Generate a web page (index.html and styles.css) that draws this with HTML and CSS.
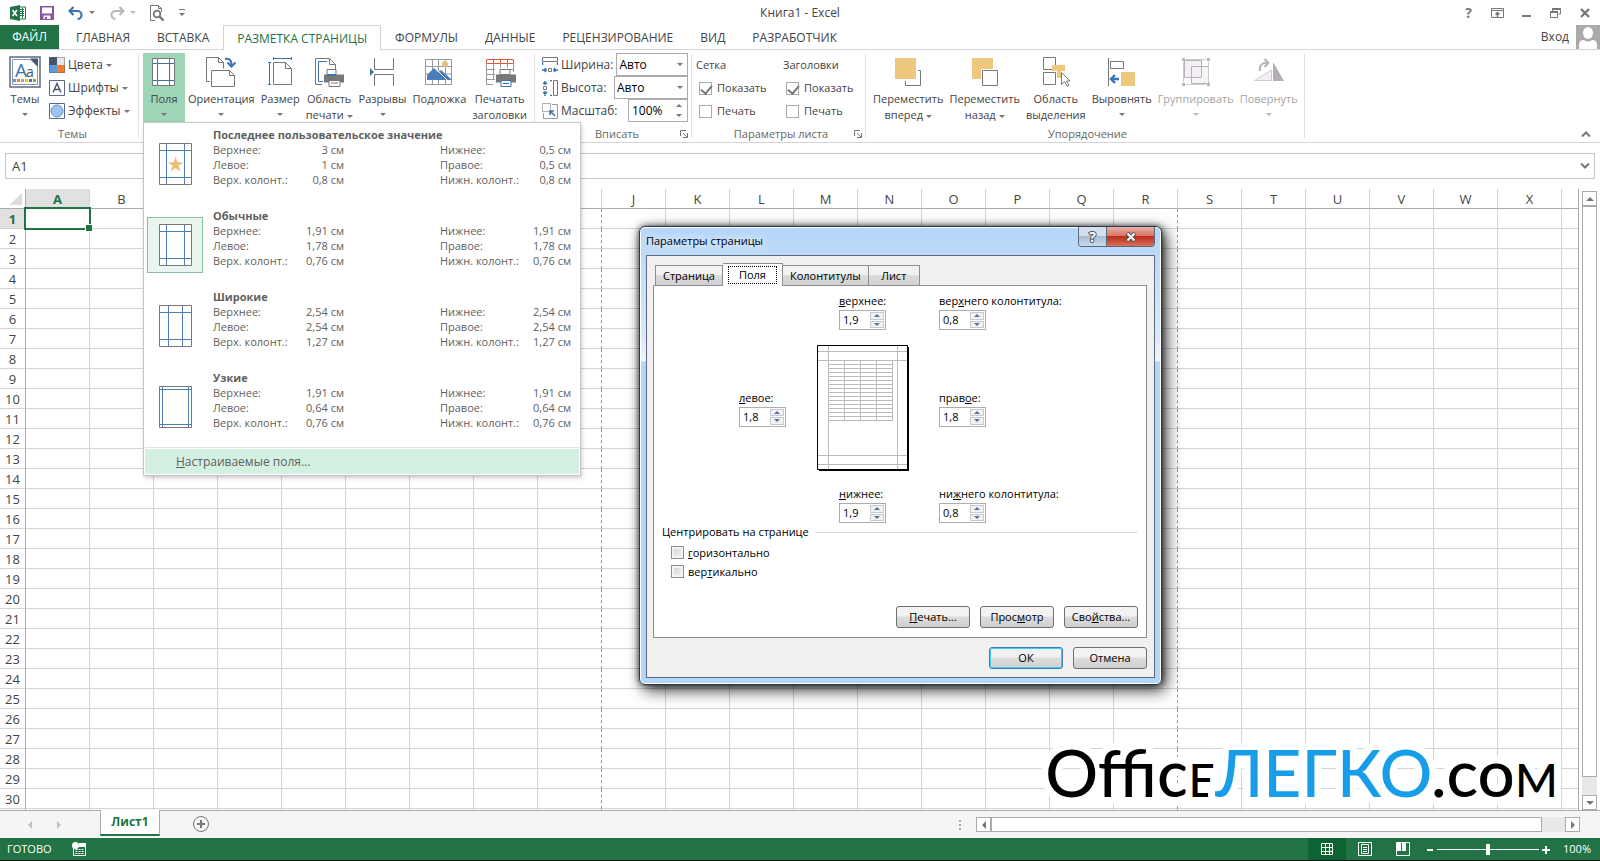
FILE: index.html
```html
<!DOCTYPE html>
<html lang="ru">
  <head>
    <meta charset="UTF-8" />
    <meta name="viewport" content="width=device-width, initial-scale=1.0" />
    <title>Книга1 - Excel</title>
    <link rel="stylesheet" href="styles.css">
  </head>
  <body>
    <header class="titlebar">
      <div class="quick-access">
        <svg width="16" height="16" viewBox="0 0 16 16">
          <path d="M9 2h6.500v12H9z" fill="#fff" stroke="#217346" />
          <path d="M10 4.500h4M10 6.500h4M10 8.500h4M10 10.500h4M12.500 3v10" stroke="#217346" />
          <path d="M0 2l10-2v16L0 14z" fill="#217346" />
          <path d="M2.500 5l4.500 6M7 5l-4.500 6" stroke="#fff" stroke-width="1.600" />
        </svg>
        <button class="quick" aria-label="Сохранить">
          <svg width="14" height="14" viewBox="0 0 14 14">
            <path d="M0 0h14v14H0z" fill="#8754a1" />
            <path d="M2 1.500h10v6H2zM3.500 9.500h7V13h-7z" fill="#fff" />
            <path d="M5 11h2v2H5z" fill="#8754a1" />
          </svg>
        </button>
        <button class="quick" aria-label="Отменить">
          <svg width="16" height="14" viewBox="0 0 16 14">
            <path d="M1.500 5h8a4 4 0 0 1 0 8" fill="none" stroke="#3b74ae" stroke-width="2.200" />
            <path d="M5.500 1l-4 4 4 4" fill="none" stroke="#3b74ae" stroke-width="2.200" />
          </svg>
          <i class="arrow"></i>
        </button>
        <button class="quick" aria-label="Вернуть" disabled>
          <svg width="16" height="14" viewBox="0 0 16 14">
            <path d="M14.500 5h-8a4 4 0 0 0 0 8M10.500 1l4 4-4 4" fill="none" stroke="#b5b5b5" stroke-width="2" />
          </svg>
          <i class="arrow"></i>
        </button>
        <button class="quick" aria-label="Просмотр">
          <svg width="15" height="16" viewBox="0 0 15 16">
            <path d="M5 15.500H.5V.5h8l3 3V7M8.500.5v3h3" fill="none" stroke="#777" />
            <circle cx="7" cy="9" r="3.300" fill="#fff" stroke="#777" stroke-width="1.800" />
            <path d="M9.500 11.500l4 4" stroke="#777" stroke-width="2.400" />
          </svg>
        </button>
        <button class="quick customize" aria-label="Настройка панели"><i class="arrow"></i></button>
      </div>
      <div class="title">Книга1 - Excel</div>
      <div class="window-controls">
        <button aria-label="Справка"><b>?</b></button>
        <button aria-label="Параметры отображения ленты">
          <svg width="13" height="10" viewBox="0 0 13 10">
            <path d="M.5.500h12v9H.5zM.5 2.500h12" fill="none" stroke="#777" />
            <path d="M6.500 9V5M4.500 6.500l2-2 2 2" fill="none" stroke="#777" stroke-width="1.400" />
          </svg>
        </button>
        <button aria-label="Свернуть">
          <svg width="10" height="10" viewBox="0 0 10 10"><path d="M0 7h9v2H0z" fill="#777" /></svg>
        </button>
        <button aria-label="Восстановить">
          <svg width="11" height="10" viewBox="0 0 11 10">
            <path d="M2.500 3V1h8v5h-2M.5 4h7v5.500h-7z" fill="none" stroke="#777" />
            <path d="M2 1h9M0 4h8" stroke="#777" stroke-width="2" />
          </svg>
        </button>
        <button aria-label="Закрыть">
          <svg width="10" height="10" viewBox="0 0 10 10"><path d="M1 1l8 8M9 1L1 9" stroke="#777" stroke-width="2.400" /></svg>
        </button>
      </div>
    </header>

    <nav class="tabs">
      <button class="file-tab">ФАЙЛ</button>
      <div class="tab-list">
        <button class="tab">ГЛАВНАЯ</button>
        <button class="tab">ВСТАВКА</button>
        <button class="tab active">РАЗМЕТКА СТРАНИЦЫ</button>
        <button class="tab">ФОРМУЛЫ</button>
        <button class="tab">ДАННЫЕ</button>
        <button class="tab">РЕЦЕНЗИРОВАНИЕ</button>
        <button class="tab">ВИД</button>
        <button class="tab">РАЗРАБОТЧИК</button>
      </div>
      <button class="sign-in">
        Вход
        <svg width="24" height="24" viewBox="0 0 24 24">
          <path d="M0 0h24v24H0z" fill="#aaa" />
          <ellipse cx="12" cy="8" rx="5" ry="6" fill="#fff" />
          <path d="M3 24v-4q0-5 5-5 4 3 8 0 5 0 5 5v4z" fill="#fff" />
        </svg>
      </button>
    </nav>

    <section class="ribbon">
      <div class="group themes">
        <div class="group-body">
          <button class="big">
            <svg width="32" height="32" viewBox="0 0 32 32">
              <path d="M1 1h30v30H1z" fill="#fff" stroke="#5a6785" stroke-width="1.500" />
              <path d="M3.500 3.500h18l7 7v18h-25z" fill="#fff" stroke="#8a93a8" />
              <path d="M21 2.500h8v8z" fill="#44546a" />
              <text x="6" y="21" class="icon-text" font-size="19" fill="#3b74ae">A</text>
              <text x="17" y="21" class="icon-text" font-size="14" fill="#44546a">a</text>
              <path d="M4 23h3v3H4z" fill="#5b9bd5" /><path d="M8 23h3v3H8z" fill="#ed7d31" />
              <path d="M12 23h3v3h-3z" fill="#a5a5a5" /><path d="M16 23h3v3h-3z" fill="#ffc000" />
              <path d="M20 23h3v3h-3z" fill="#4472c4" /><path d="M24 23h3v3h-3z" fill="#70ad47" />
            </svg>
            <span>Темы</span><i class="arrow"></i>
          </button>
          <div class="small-list">
            <button class="small">
              <svg width="16" height="16" viewBox="0 0 16 16">
                <path d="M0 0h8v8H0z" fill="#44546a" /><path d="M8 0h8v8H8z" fill="#e7e6e6" />
                <path d="M0 8h8v8H0z" fill="#5b9bd5" /><path d="M8 8h8v8H8z" fill="#ed7d31" />
                <path d="M.5.500h15v15H.5z" fill="none" stroke="#666" stroke-opacity=".5" />
              </svg>
              Цвета <i class="arrow"></i>
            </button>
            <button class="small">
              <svg width="16" height="16" viewBox="0 0 16 16">
                <path d="M.5.500h15v15H.5z" fill="#fff" stroke="#5a6785" />
                <path d="M4 12.500l4-9 4 9M5.500 9.500h5" fill="none" stroke="#44546a" stroke-width="1.400" />
              </svg>
              Шрифты <i class="arrow"></i>
            </button>
            <button class="small">
              <svg width="16" height="16" viewBox="0 0 16 16">
                <path d="M.5.500h15v15H.5z" fill="#fff" stroke="#5a6785" />
                <circle cx="8" cy="8" r="6" fill="#9dc3ee" stroke="#5b8fd0" />
              </svg>
              Эффекты <i class="arrow"></i>
            </button>
          </div>
        </div>
        <div class="group-name">Темы</div>
      </div>

      <div class="group page-setup">
        <div class="group-body">
          <div class="dropdown">
            <button class="big open">
              <svg width="32" height="32" viewBox="0 0 32 32">
                <path d="M4.500 2.500h22v27h-22z" fill="#fff" stroke="#777" />
                <path d="M9.500 3v26M21.500 3v26M5 7.500h21M5 24.500h21" stroke="#3b74ae" />
              </svg>
              <span>Поля</span><i class="arrow"></i>
            </button>
            <div class="menu">
              <button class="preset">
                <span class="preset-icon">
                  <svg width="33" height="42" viewBox="0 0 33 42">
                    <path d="M.5.500h32v41H.5z" fill="#fff" stroke="#777" />
                    <path d="M7.500 1v40M25.500 1v40M1 7.500h31M1 34.500h31" stroke="#4a7ebb" />
                    <path d="M16.500 13.500l1.900 5.700h6l-4.900 3.500 1.900 5.800-4.900-3.600-4.900 3.600 1.900-5.800-4.900-3.500h6z" fill="#e8bf7a" />
                  </svg>
                </span>
                <span class="preset-text">
                  <b>Последнее пользовательское значение</b>
                  <span>Верхнее:</span><span>3 см</span><span>Нижнее:</span><span>0,5 см</span>
                  <span>Левое:</span><span>1 см</span><span>Правое:</span><span>0,5 см</span>
                  <span>Верх. колонт.:</span><span>0,8 см</span><span>Нижн. колонт.:</span><span>0,8 см</span>
                </span>
              </button>
              <button class="preset selected">
                <span class="preset-icon">
                  <svg width="33" height="42" viewBox="0 0 33 42">
                    <path d="M.5.500h32v41H.5z" fill="#fff" stroke="#777" />
                    <path d="M7.500 1v40M25.500 1v40M1 7.500h31M1 34.500h31" stroke="#4a7ebb" />
                  </svg>
                </span>
                <span class="preset-text">
                  <b>Обычные</b>
                  <span>Верхнее:</span><span>1,91 см</span><span>Нижнее:</span><span>1,91 см</span>
                  <span>Левое:</span><span>1,78 см</span><span>Правое:</span><span>1,78 см</span>
                  <span>Верх. колонт.:</span><span>0,76 см</span><span>Нижн. колонт.:</span><span>0,76 см</span>
                </span>
              </button>
              <button class="preset">
                <span class="preset-icon">
                  <svg width="33" height="42" viewBox="0 0 33 42">
                    <path d="M.5.500h32v41H.5z" fill="#fff" stroke="#777" />
                    <path d="M9.500 1v40M23.500 1v40M1 7.500h31M1 34.500h31" stroke="#4a7ebb" />
                  </svg>
                </span>
                <span class="preset-text">
                  <b>Широкие</b>
                  <span>Верхнее:</span><span>2,54 см</span><span>Нижнее:</span><span>2,54 см</span>
                  <span>Левое:</span><span>2,54 см</span><span>Правое:</span><span>2,54 см</span>
                  <span>Верх. колонт.:</span><span>1,27 см</span><span>Нижн. колонт.:</span><span>1,27 см</span>
                </span>
              </button>
              <button class="preset">
                <span class="preset-icon">
                  <svg width="33" height="42" viewBox="0 0 33 42">
                    <path d="M.5.500h32v41H.5z" fill="#fff" stroke="#777" />
                    <path d="M3.500 1v40M29.500 1v40M1 3.500h31M1 38.500h31" stroke="#4a7ebb" />
                  </svg>
                </span>
                <span class="preset-text">
                  <b>Узкие</b>
                  <span>Верхнее:</span><span>1,91 см</span><span>Нижнее:</span><span>1,91 см</span>
                  <span>Левое:</span><span>0,64 см</span><span>Правое:</span><span>0,64 см</span>
                  <span>Верх. колонт.:</span><span>0,76 см</span><span>Нижн. колонт.:</span><span>0,76 см</span>
                </span>
              </button>
              <button class="custom"><u>Н</u>астраиваемые поля...</button>
            </div>
          </div>
          <button class="big">
            <svg width="32" height="32" viewBox="0 0 32 32">
              <path d="M5 25.500H1.500v-24h12l5 5v6M13.500 1.500v5h5" fill="none" stroke="#777" />
              <path d="M6.500 14.500h18l5 5v11h-23zM24.500 14.500v5h5" fill="#fff" stroke="#777" />
              <path d="M20 3c5-1 7 2 6.500 8" fill="none" stroke="#3b74ae" stroke-width="2" />
              <path d="M22.500 6.500l4 4 4-4" fill="none" stroke="#3b74ae" stroke-width="2" />
            </svg>
            <span>Ориентация</span><i class="arrow"></i>
          </button>
          <button class="big">
            <svg width="32" height="32" viewBox="0 0 32 32">
              <path d="M9.500 6.500h12l6 6v16h-18zM21.500 6.500v6h6" fill="#fff" stroke="#777" />
              <path d="M9 2.500h19M9.500 1v3M27.500 1v3M5.500 6v23M4 6.500h3M4 28.500h3" stroke="#3b74ae" />
            </svg>
            <span>Размер</span><i class="arrow"></i>
          </button>
          <button class="big">
            <svg width="32" height="32" viewBox="0 0 32 32">
              <path d="M9 28.500H2.500v-26h14l6 6v5M16.500 2.500v6h6" fill="none" stroke="#777" />
              <path d="M10 25.500H5.500v-20H14" fill="none" stroke="#3b74ae" />
              <path d="M14 13.500h9v5h-9z" fill="#fff" stroke="#777" />
              <path d="M11 18.500h20v8H11z" fill="#777" />
              <path d="M16 24.500h11v6H16zM18 27h7" fill="#fff" stroke="#777" />
              <path d="M14 19h9" stroke="#3b74ae" stroke-width="2" />
            </svg>
            <span>Область<br />печати <i class="arrow"></i></span>
          </button>
          <button class="big">
            <svg width="32" height="32" viewBox="0 0 32 32">
              <path d="M7.500 2v11.500h19V2M7.500 30V18.500h19V30" fill="none" stroke="#777" />
              <path d="M3 12l4 4-4 4z" fill="#3b74ae" />
            </svg>
            <span>Разрывы</span><i class="arrow"></i>
          </button>
          <button class="big">
            <svg width="32" height="32" viewBox="0 0 32 32">
              <path d="M2.500 3.500h26v25h-26zM9.500 3v25M15.500 3v25M22.500 3v25M3 10.500h25M3 18h25" fill="none" stroke="#999" />
              <circle cx="22" cy="8" r="3" fill="#e8bf7a" />
              <path d="M4 24v-5l7-7 4 4 3-2 10 9v1z" fill="#4a7ebb" />
              <path d="M15 15l9 9" stroke="#fff" />
            </svg>
            <span>Подложка</span>
          </button>
          <button class="big">
            <svg width="32" height="32" viewBox="0 0 32 32">
              <path d="M2.500 8v20.500H9M9.500 8v16M3 13.500h8M3 18.500h8M3 23.500h8M16.500 8v4M23.500 8v4M29.500 8v8M17 13.500h12" fill="none" stroke="#999" />
              <path d="M2.500 3.500h27v4h-27zM9.500 3v5M16.500 3v5M23.500 3v5" fill="#fff" stroke="#dd5b40" />
              <path d="M16 13.500h10v5H16z" fill="#fff" stroke="#777" />
              <path d="M12 18.500h20v8H12z" fill="#777" />
              <path d="M17 24.500h10v6H17zM19 27.500h6" fill="#fff" stroke="#3b74ae" />
            </svg>
            <span>Печатать<br />заголовки</span>
          </button>
        </div>
      </div>

      <div class="group fit">
        <div class="group-body fit-rows">
          <div class="fit-row">
            <svg width="16" height="16" viewBox="0 0 16 16">
              <path d="M.5.500h15v4H.5zM6.500 11.500h3v3h-3z" fill="#fff" stroke="#777" />
              <path d="M4 11l-2 2 2 2M0 13h5M12 11l2 2-2 2M11 13h5M.5 5v3M15.500 5v3" fill="none" stroke="#3b74ae" stroke-width="1.400" />
            </svg>
            <label for="fit-width">Ширина:</label>
            <div class="select"><select id="fit-width"><option>Авто</option></select></div>
          </div>
          <div class="fit-row">
            <svg width="16" height="16" viewBox="0 0 16 16">
              <path d="M11.500.500h4v15h-4zM1.500 6.500h3v3h-3z" fill="#fff" stroke="#777" />
              <path d="M1 4l2-2 2 2M3 1v4M1 12l2 2 2-2M3 11v5M8 .5h2M8 15.500h2" fill="none" stroke="#3b74ae" stroke-width="1.400" />
            </svg>
            <label for="fit-height">Высота:</label>
            <div class="select"><select id="fit-height"><option>Авто</option></select></div>
          </div>
          <div class="fit-row">
            <svg width="16" height="16" viewBox="0 0 16 16">
              <path d="M10 1.500h5.500v14h-14V10" fill="none" stroke="#999" />
              <path d="M.5.500h8v8h-8z" fill="#fff" stroke="#666" stroke-dasharray="1 1" />
              <path d="M13 13l-4-4M8 12V8h4" fill="none" stroke="#3b74ae" stroke-width="1.600" />
            </svg>
            <label for="scale">Масштаб:</label>
            <div class="spin scale">
              <input id="scale" type="text" value="100%" />
              <span><button aria-label="Больше"></button><button aria-label="Меньше"></button></span>
            </div>
          </div>
        </div>
        <div class="group-name">Вписать
          <button class="launcher" aria-label="Параметры"><svg width="8" height="8" viewBox="0 0 8 8"><path d="M.5 6V.500H6M3 3l4 4M7.500 3v4.500H3" fill="none" stroke="#777" /></svg></button>
        </div>
      </div>

      <div class="group sheet-options">
        <div class="group-body">
          <div class="options">
            <span>Сетка</span>
            <label><input type="checkbox" checked /> Показать</label>
            <label><input type="checkbox" /> Печать</label>
          </div>
          <div class="options">
            <span>Заголовки</span>
            <label><input type="checkbox" checked /> Показать</label>
            <label><input type="checkbox" /> Печать</label>
          </div>
        </div>
        <div class="group-name">Параметры листа
          <button class="launcher" aria-label="Параметры"><svg width="8" height="8" viewBox="0 0 8 8"><path d="M.5 6V.500H6M3 3l4 4M7.500 3v4.500H3" fill="none" stroke="#777" /></svg></button>
        </div>
      </div>

      <div class="group arrange">
        <div class="group-body">
          <button class="big">
            <svg width="32" height="32" viewBox="0 0 32 32">
              <path d="M13.500 14.500h15v15h-15z" fill="#fff" stroke="#777" />
              <path d="M2 1h24v24H2z" fill="#fff" />
              <path d="M3 2h21v21H3z" fill="#edc87e" />
            </svg>
            <span>Переместить<br />вперед <i class="arrow"></i></span>
          </button>
          <button class="big">
            <svg width="32" height="32" viewBox="0 0 32 32">
              <path d="M3 2h21v21H3z" fill="#edc87e" />
              <path d="M12 13h18v18H12z" fill="#fff" />
              <path d="M13.500 14.500h15v15h-15z" fill="#fff" stroke="#777" />
            </svg>
            <span>Переместить<br />назад <i class="arrow"></i></span>
          </button>
          <button class="big">
            <svg width="32" height="32" viewBox="0 0 32 32">
              <path d="M3.500 1.500h12v12h-12zM3.500 16.500h12v12h-12z" fill="#fff" stroke="#777" />
              <path d="M12 9h13v6h-4v7h-4v-7h-5z" fill="#edc87e" />
              <path d="M21.500 16.500v12l3-3 2.500 5 2-1-2.500-4.500h3.500z" fill="#fff" stroke="#777" />
            </svg>
            <span>Область<br />выделения</span>
          </button>
          <button class="big">
            <svg width="32" height="32" viewBox="0 0 32 32">
              <path d="M2.500 2v28M4.500 5.500h13v7h-13z" fill="none" stroke="#777" />
              <path d="M15 16h14v14H15z" fill="#edc87e" />
              <path d="M9 19l-4 4 4 4M5 23h8" fill="none" stroke="#3b74ae" stroke-width="2.400" />
            </svg>
            <span>Выровнять</span><i class="arrow"></i>
          </button>
          <button class="big" disabled>
            <svg width="32" height="32" viewBox="0 0 32 32">
              <path d="M4.500 4.500h17v17h-17z" fill="#f5eff5" stroke="#b5b5b5" />
              <path d="M11.500 10.500h17v17h-17zM11.500 10.500h10v11h-10z" fill="#f5eff5" fill-opacity=".7" stroke="#b5b5b5" />
              <path d="M2 2h3v3H2zM27 2h3v3h-3zM2 27h3v3H2zM27 27h3v3h-3z" fill="#b5b5b5" />
              <path d="M3.500 6v20M6 3.500h20M28.500 6v20M6 28.500h20" stroke="#ccc" />
            </svg>
            <span>Группировать</span><i class="arrow"></i>
          </button>
          <button class="big" disabled>
            <svg width="32" height="32" viewBox="0 0 32 32">
              <path d="M1.500 24.500h17V14z" fill="#f5eff5" stroke="#ccc" />
              <path d="M20 6v19h11z" fill="#b0aeb0" />
              <path d="M7 15c-1-6 3-9 8-8M11.500 3l4 4-4 4" fill="none" stroke="#b5b5b5" stroke-width="2" />
            </svg>
            <span>Повернуть</span><i class="arrow"></i>
          </button>
        </div>
        <div class="group-name">Упорядочение</div>
      </div>
      <button class="collapse" aria-label="Свернуть ленту">
        <svg width="10" height="6" viewBox="0 0 10 6"><path d="M1 5.500l4-4 4 4" fill="none" stroke="#777" stroke-width="2" /></svg>
      </button>
    </section>

    <div class="formula-row">
      <div class="formula-bar">
        <input class="name-box" type="text" value="A1" aria-label="Имя" />
        <input class="formula" type="text" aria-label="Формула" />
        <button aria-label="Развернуть">
          <svg width="10" height="6" viewBox="0 0 10 6"><path d="M1 .5l4 4 4-4" fill="none" stroke="#777" stroke-width="2" /></svg>
        </button>
      </div>
    </div>

    <main class="workspace">
      <div class="sheet">
        <table class="grid" id="grid"></table>
        <div class="watermark">Offic<span class="caps">e</span><span class="blue">ЛЕГКО</span>.co<span class="caps">m</span></div>
      </div>
      <div class="vscroll">
        <button class="up" aria-label="Вверх"></button>
        <div class="track"><div class="thumb"></div></div>
        <button class="down" aria-label="Вниз"></button>
      </div>
    </main>

    <div class="sheet-bar">
      <button class="nav prev" aria-label="Предыдущий лист" disabled></button>
      <button class="nav next" aria-label="Следующий лист" disabled></button>
      <button class="sheet-tab">Лист1</button>
      <button class="add-sheet" aria-label="Новый лист">
        <svg width="18" height="18" viewBox="0 0 18 18">
          <circle cx="9" cy="9" r="7.500" fill="none" stroke="#777" />
          <path d="M9 5v8M5 9h8" stroke="#777" stroke-width="2" />
        </svg>
      </button>
      <div class="hscroll">
        <svg class="grip" width="2" height="10" viewBox="0 0 2 10"><path d="M0 0h2v2H0zM0 4h2v2H0zM0 8h2v2H0z" fill="#aaa" /></svg>
        <button class="left" aria-label="Влево"></button>
        <div class="track"><div class="thumb"></div></div>
        <button class="right" aria-label="Вправо"></button>
      </div>
    </div>

    <footer class="status">
      <span>ГОТОВО</span>
      <svg width="14" height="14" viewBox="0 0 14 14">
        <path d="M1.500 4v9.500h12V1.500H7" fill="none" stroke="#fff" />
        <path d="M7 1h7v4H7z" fill="#fff" />
        <path d="M3.500 7.500h9M3.500 9.500h9M3.500 11.500h9" stroke="#fff" stroke-dasharray="2 1" />
        <circle cx="3.500" cy="3.500" r="3.500" fill="#fff" />
      </svg>
      <div class="views">
        <button class="on" aria-label="Обычный">
          <svg width="14" height="14" viewBox="0 0 14 14"><path d="M1.500 1.500h11v11h-11zM5.500 1v12M9.500 1v12M1 5.500h12M1 9.500h12" fill="none" stroke="#fff" /></svg>
        </button>
        <button aria-label="Разметка страницы">
          <svg width="14" height="14" viewBox="0 0 14 14"><path d="M.5.500h13v13H.5zM3.500 2.500h7v9h-7zM5 5.500h4M5 7.500h4M5 9.500h4" fill="none" stroke="#fff" /></svg>
        </button>
        <button aria-label="Страничный">
          <svg width="14" height="14" viewBox="0 0 14 14"><path d="M.5.500h13v13H.5z" fill="none" stroke="#fff" /><path d="M1 0h4v9H1zM6 0h4v9H6z" fill="#fff" /></svg>
        </button>
      </div>
      <div class="zoom">
        <button aria-label="Уменьшить"><svg width="9" height="9" viewBox="0 0 9 9"><path d="M1 5h6" stroke="#fff" stroke-width="2" /></svg></button>
        <input type="range" min="0" max="100" value="50" aria-label="Масштаб листа" />
        <button aria-label="Увеличить"><svg width="9" height="9" viewBox="0 0 9 9"><path d="M1 5h8M5 1v8" stroke="#fff" stroke-width="2" /></svg></button>
      </div>
      <span class="percent">100%</span>
    </footer>

    <div class="dialog" role="dialog" aria-labelledby="dialog-title">
      <div class="dialog-title">
        <span id="dialog-title">Параметры страницы</span>
        <div class="dialog-controls">
          <button class="help" aria-label="Помощь">?</button>
          <button class="close" aria-label="Закрыть">
            <svg width="12" height="10" viewBox="0 0 12 10"><path d="M2 1l8 8M10 1L2 9" stroke="#555" stroke-width="4" /><path d="M2.500 1.500l7 7M9.500 1.500l-7 7" stroke="#fff" stroke-width="2" /></svg>
          </button>
        </div>
      </div>
      <div class="dialog-body">
        <div class="dialog-tabs">
          <button>Страница</button>
          <button class="active"><span>Поля</span></button>
          <button>Колонтитулы</button>
          <button>Лист</button>
        </div>
        <div class="panel">
          <div class="margins">
            <div class="field top">
              <label for="m-top"><u>в</u>ерхнее:</label>
              <div class="spin"><input id="m-top" type="text" value="1,9" /><span><button aria-label="Больше"></button><button aria-label="Меньше"></button></span></div>
            </div>
            <div class="field">
              <label for="m-header">вер<u>х</u>него колонтитула:</label>
              <div class="spin"><input id="m-header" type="text" value="0,8" /><span><button aria-label="Больше"></button><button aria-label="Меньше"></button></span></div>
            </div>
            <div class="field left">
              <label for="m-left"><u>л</u>евое:</label>
              <div class="spin"><input id="m-left" type="text" value="1,8" /><span><button aria-label="Больше"></button><button aria-label="Меньше"></button></span></div>
            </div>
            <svg class="preview" width="92" height="126" viewBox="0 0 92 126">
              <path d="M2 2h90v124H2z" fill="#000" />
              <path d="M.5.500h90v124H.5z" fill="#fff" stroke="#000" />
              <path d="M11.500 1v123M80.500 1v123M1 6.500h89M1 15.500h89M1 110.500h89M1 119.500h89" stroke="#bbb" />
              <path d="M27.500 15v61M43.500 15v61M59.500 15v61M75.500 15v61M12 19.500h64M12 23.500h64M12 27.500h64M12 31.500h64M12 35.500h64M12 39.500h64M12 43.500h64M12 47.500h64M12 51.500h64M12 55.500h64M12 59.500h64M12 63.500h64M12 67.500h64M12 71.500h64M12 75.500h64" stroke="#bbb" />
            </svg>
            <div class="field">
              <label for="m-right">прав<u>о</u>е:</label>
              <div class="spin"><input id="m-right" type="text" value="1,8" /><span><button aria-label="Больше"></button><button aria-label="Меньше"></button></span></div>
            </div>
            <div class="field top">
              <label for="m-bottom"><u>н</u>ижнее:</label>
              <div class="spin"><input id="m-bottom" type="text" value="1,9" /><span><button aria-label="Больше"></button><button aria-label="Меньше"></button></span></div>
            </div>
            <div class="field">
              <label for="m-footer">ни<u>ж</u>него колонтитула:</label>
              <div class="spin"><input id="m-footer" type="text" value="0,8" /><span><button aria-label="Больше"></button><button aria-label="Меньше"></button></span></div>
            </div>
          </div>
          <div class="centering">
            <h2>Центрировать на странице</h2>
            <label><input type="checkbox" /><span><u>г</u>оризонтально</span></label>
            <label><input type="checkbox" /><span>вер<u>т</u>икально</span></label>
          </div>
          <div class="actions">
            <button><u>П</u>ечать...</button>
            <button>Прос<u>м</u>отр</button>
            <button>Сво<u>й</u>ства...</button>
          </div>
        </div>
        <div class="actions">
          <button class="default">ОК</button>
          <button>Отмена</button>
        </div>
      </div>
    </div>

    <script>
      const grid = document.getElementById("grid");
      const rowCount = 30;
      // the last column is only partly visible and has no letter
      const columns = [..."ABCDEFGHIJKLMNOPQRSTUVWX", ""];
      // page break lines go on the right of these columns
      const breaks = ["I", "R"];

      let html = "<thead><tr><th class='corner'></th>";
      columns.forEach((name) => {
        html += `<th class="${name === "A" ? "current" : ""}">${name}</th>`;
      });
      html += "</tr></thead><tbody>";

      for (let row = 1; row <= rowCount + 1; row++) {
        const label = row <= rowCount ? row : "";
        html += `<tr><th class="${row === 1 ? "current" : ""}">${label}</th>`;
        columns.forEach((name) => {
          let cls = breaks.includes(name) ? "break" : "";
          if (row === 1 && name === "A") cls = "selected";
          html += `<td class="${cls}"></td>`;
        });
        html += "</tr>";
      }
      grid.innerHTML = html + "</tbody>";
    </script>
  </body>
</html>
```
FILE: styles.css
```css
:root {
  --green: #217346;
  --text: #444;
  --muted: #666;
  --line: #d4d4d4;
  --border: #ababab;
  --ui: "Open Sans", "Noto Sans", sans-serif;
}
* {
  box-sizing: border-box;
}
body {
  margin: 0;
  height: 100vh;
  display: flex;
  flex-direction: column;
  overflow: hidden;
  background: #fff;
  color: var(--text);
  font: 12px/16px var(--ui);
  position: relative;
  border-bottom: 1px solid #111;
}
button,
input,
select {
  font: inherit;
  color: inherit;
  margin: 0;
  padding: 0;
  border: 0;
  background: none;
}
button {
  white-space: nowrap;
}
svg {
  display: block;
  flex: none;
}
.icon-text {
  font-family: var(--ui);
}
.arrow {
  display: inline-block;
  border: 3px solid transparent;
  border-top-color: #777;
  border-bottom: 0;
  vertical-align: middle;
}
:disabled .arrow {
  border-top-color: #bbb;
}

/* title bar */
.titlebar {
  display: grid;
  grid-template-columns: 1fr auto 1fr;
  align-items: center;
  height: 25px;
}
.quick-access {
  display: flex;
  align-items: center;
  gap: 14px;
  padding-left: 10px;
}
.quick {
  display: flex;
  align-items: center;
  gap: 5px;
}
.customize {
  padding-top: 3px;
  border-top: 1px solid #777;
}
.window-controls {
  display: flex;
  justify-content: flex-end;
  padding-right: 5px;
}
.window-controls button {
  width: 29px;
  height: 20px;
  display: grid;
  place-items: center;
  color: #777;
  font-size: 14px;
}
.window-controls button:last-child {
  width: 20px;
  margin-left: 5px;
}

/* ribbon tabs */
.tabs {
  display: flex;
  height: 25px;
  border-bottom: 1px solid var(--line);
}
.file-tab {
  width: 59px;
  background: var(--green);
  color: #fff;
}
.tab-list {
  display: flex;
  flex: 1;
  gap: 1px;
  padding-left: 4px;
}
.tab {
  padding: 2px 13px 0;
}
.tab.active {
  color: var(--green);
  border: 1px solid var(--line);
  border-bottom: 0;
  background: #fff;
  margin-bottom: -1px;
}
.sign-in {
  display: flex;
  align-items: center;
  gap: 7px;
}

/* ribbon */
.ribbon {
  display: flex;
  height: 93px;
  padding-top: 3px;
  border-bottom: 1px solid var(--line);
}
.group {
  display: flex;
  flex-direction: column;
  flex: none;
  position: relative;
}
.group::after {
  content: "";
  position: absolute;
  top: 1px;
  right: 0;
  bottom: 4px;
  width: 1px;
  background: #e1e1e1;
}
.group-body {
  display: flex;
  height: 73px;
}
.group-name {
  text-align: center;
  font-size: 11px;
  color: var(--muted);
}
.themes {
  width: 139px;
  padding-left: 6px;
}
.page-setup {
  width: 396px;
  padding-left: 4px;
}
.fit {
  width: 157px;
  padding-left: 7px;
}
.sheet-options {
  width: 174px;
  padding-left: 4px;
}
.arrange {
  width: 439px;
  padding-left: 4px;
}
.big {
  display: flex;
  flex-direction: column;
  align-items: center;
  height: 70px;
  padding: 3px 3px 0;
  font-size: 11px;
  text-align: center;
}
.big > svg {
  margin-bottom: 3px;
}
.big > .arrow {
  margin-top: 6px;
}
.big:disabled {
  color: #a6a6a6;
}
.big.open {
  width: 42px;
  background: #9fd5b7;
}
.small-list {
  display: flex;
  flex-direction: column;
  gap: 7px;
  padding: 4px 0 0 5px;
}
.small {
  display: flex;
  align-items: center;
  gap: 3px;
}
.fit-rows {
  flex-direction: column;
}
.fit-row {
  display: flex;
  align-items: center;
  gap: 3px;
  height: 23px;
  padding-right: 4px;
}
.fit-row label {
  flex: 1;
}
.select {
  position: relative;
  width: 74px;
  border: 1px solid var(--border);
}
.select select {
  appearance: none;
  display: block;
  width: 100%;
  height: 21px;
  padding-left: 2px;
  color: #000;
  background: #fff;
}
.select::after {
  content: "";
  position: absolute;
  top: 9px;
  right: 4px;
  border: 3px solid transparent;
  border-top-color: #777;
  border-bottom: 0;
  pointer-events: none;
}
.launcher {
  position: absolute;
  right: 4px;
  bottom: 4px;
}
.options {
  display: flex;
  flex-direction: column;
  gap: 7px;
  padding-top: 4px;
  width: 87px;
  font-size: 11px;
}
.options + .options {
  width: 82px;
}
.options label {
  display: flex;
  align-items: center;
  gap: 5px;
  padding-left: 3px;
}
.options input {
  appearance: none;
  width: 13px;
  height: 13px;
  border: 1px solid var(--border);
  flex: none;
}
.options input:checked::before {
  content: "";
  display: block;
  width: 5px;
  height: 9px;
  margin: 0 3px;
  border: solid #777;
  border-width: 0 2px 2px 0;
  transform: rotate(40deg);
}
.collapse {
  margin: auto 9px 5px auto;
}

/* spin boxes */
.spin {
  display: flex;
  width: 47px;
  height: 20px;
  border: 1px solid #abadb3;
  background: #fff;
  color: #000;
}
.spin input {
  flex: 1;
  min-width: 0;
  padding-left: 3px;
}
.spin > span {
  display: flex;
  flex-direction: column;
  width: 16px;
  padding: 1px;
  gap: 1px;
}
.spin button {
  flex: 1;
  display: grid;
  place-items: center;
  border: 1px solid #c8c8d0;
  background: #f2f2f2;
}
.spin button::before {
  content: "";
  border: 3px solid transparent;
  border-bottom-color: #5a6ea8;
  border-top: 0;
}
.spin button + button::before {
  border-top: 3px solid #5a6ea8;
  border-bottom: 0;
}
.spin.scale {
  width: 60px;
  height: 23px;
}
.spin.scale button {
  border: 0;
  background: none;
}
.spin.scale button::before {
  border-bottom-color: #777;
}
.spin.scale button + button::before {
  border-top-color: #777;
}

/* margins menu */
.dropdown {
  position: relative;
}
.menu {
  position: absolute;
  z-index: 2;
  top: 69px;
  left: 0;
  width: 438px;
  padding: 0 1px 1px;
  border: 1px solid #c6c6c6;
  background: #fff;
  box-shadow: 1px 2px 4px rgba(0, 0, 0, 0.2);
  color: #5f5f5f;
}
.preset {
  display: flex;
  align-items: center;
  gap: 10px;
  width: 100%;
  height: 81px;
  padding: 0 8px 0 2px;
  font-size: 11px;
  text-align: left;
}
.preset-icon {
  flex: none;
  display: grid;
  place-items: center;
  width: 56px;
  height: 56px;
  border: 1px solid transparent;
}
.selected .preset-icon {
  border-color: #86bfa0;
  background: #e9f5ee;
}
.preset-text {
  align-self: flex-start;
  flex: 1;
  display: grid;
  grid-template-columns: 86px 45px 1fr 47px;
  padding-top: 4px;
  line-height: 15px;
}
.preset-text b {
  grid-column: 1 / -1;
}
.preset-text span:nth-of-type(even) {
  justify-self: end;
}
.preset-text span:nth-of-type(4n + 3) {
  padding-left: 96px;
}
.custom {
  width: 100%;
  height: 27px;
  padding: 1px 0 0 31px;
  border-top: 1px solid #e1e1e1;
  background: #d3f0e0;
  box-shadow: inset 0 1px 0 #fff;
  font-size: 12px;
  text-align: left;
}

/* formula bar */
.formula-row {
  padding: 10px 5px;
}
.formula-bar {
  display: flex;
  align-items: center;
  height: 26px;
  padding: 0 4px 0 6px;
  border: 1px solid #c6c6c6;
}
.name-box {
  width: 130px;
  font-size: 13px;
}
.formula {
  flex: 1;
}

/* sheet */
.workspace {
  display: flex;
  flex: 1;
  min-height: 0;
}
.sheet {
  position: relative;
  flex: 1;
  overflow: hidden;
  border-right: 1px solid var(--border);
}
.grid {
  table-layout: fixed;
  width: 1626px;
  border-collapse: separate;
  border-spacing: 0;
}
.grid th,
.grid td {
  width: 64px;
  height: 20px;
  padding: 0;
  border: solid var(--line);
  border-width: 0 1px 1px 0;
}
.grid th {
  font-size: 13px;
  line-height: 18px;
  font-weight: 400;
}
.grid thead th {
  border-bottom-color: var(--border);
}
.grid tbody th {
  padding-top: 1px;
}
.grid th:first-child {
  width: 26px;
  border-right-color: var(--border);
}
.grid .corner {
  background: linear-gradient(135deg, #fff 50%, #dcdcdc 50%) 10px 4px / 12px 12px no-repeat;
}
.grid th.current {
  background: #e1e1e1;
  color: var(--green);
  font-weight: 700;
}
.grid td.break {
  border-right: 1px dashed #999;
}
.grid td.selected {
  position: relative;
}
.grid td.selected::before {
  content: "";
  position: absolute;
  inset: -2px;
  border: 2px solid var(--green);
}
.grid td.selected::after {
  content: "";
  position: absolute;
  right: -3px;
  bottom: -3px;
  width: 6px;
  height: 6px;
  background: var(--green);
  border: solid #fff;
  border-width: 1px 0 0 1px;
}
.watermark {
  position: absolute;
  right: 20px;
  bottom: 0;
  color: #000;
  font: 500 66px/76px Lato, sans-serif;
  -webkit-text-stroke: 14px #fff;
  paint-order: stroke fill;
}
.watermark .caps {
  font-variant: small-caps;
}
.watermark .blue {
  color: #189ee8;
}

/* scroll bars */
.vscroll {
  display: flex;
  flex-direction: column;
  width: 21px;
  padding: 2px 3px 0;
}
.vscroll button,
.hscroll button {
  display: grid;
  place-items: center;
  flex: none;
  width: 15px;
  height: 15px;
  border: 1px solid var(--border);
  background: #fff;
}
.vscroll button::before,
.hscroll button::before {
  content: "";
  border: 4px solid transparent;
}
.vscroll .up::before {
  border-bottom-color: #777;
  border-top: 0;
}
.vscroll .down::before {
  border-top-color: #777;
  border-bottom: 0;
}
.hscroll .left::before {
  border-right-color: #777;
  border-left: 0;
}
.hscroll .right::before {
  border-left-color: #777;
  border-right: 0;
}
.track {
  flex: 1;
  background: #e8e8e8;
}
.thumb {
  border: 1px solid var(--border);
  background: #fff;
}
.vscroll .thumb {
  height: 97%;
}
.hscroll .thumb {
  width: 96%;
  height: 15px;
}
.sheet-bar {
  display: flex;
  align-items: flex-start;
  height: 28px;
  padding: 0 20px 0 28px;
  border-top: 1px solid var(--border);
  background: #f5f5f5;
}
.nav {
  width: 29px;
  height: 27px;
}
.nav::before {
  content: "";
  display: block;
  width: 0;
  border: 4px solid transparent;
}
.nav.prev::before {
  border-right-color: #c0c0c0;
  border-left: 0;
}
.nav.next::before {
  border-left-color: #c0c0c0;
  border-right: 0;
}
.sheet-tab {
  width: 60px;
  height: 26px;
  margin: -1px 32px 0 14px;
  border: solid var(--border);
  border-width: 0 1px;
  border-bottom: 2px solid var(--green);
  background: #fff;
  color: var(--green);
  font-weight: 700;
}
.add-sheet {
  padding-top: 4px;
}
.hscroll {
  display: flex;
  align-items: center;
  width: 40%;
  margin-left: auto;
  padding-top: 6px;
}
.hscroll .grip {
  margin-right: 15px;
}

/* status bar */
.status {
  display: flex;
  align-items: center;
  height: 22px;
  padding: 0 9px 0 7px;
  background: var(--green);
  color: #fff;
  font-size: 11px;
}
.status > svg {
  margin-left: 20px;
}
.views {
  display: flex;
  align-self: stretch;
  margin-left: auto;
}
.views button {
  display: grid;
  place-items: center;
  width: 38px;
}
.views .on {
  background: #0e6333;
}
.zoom {
  display: flex;
  align-items: center;
  gap: 2px;
  margin: 0 13px 0 4px;
}
.zoom input {
  appearance: none;
  width: 102px;
  height: 12px;
  background: linear-gradient(#fff, #fff) center / 100% 1px no-repeat;
}
.zoom input::-webkit-slider-thumb {
  appearance: none;
  width: 4px;
  height: 11px;
  background: #fff;
}

/* page setup dialog */
.dialog {
  position: absolute;
  z-index: 3;
  left: 639px;
  top: 226px;
  width: 523px;
  padding: 0 6px 6px;
  border: 1px solid #2b3a48;
  border-radius: 6px;
  background: linear-gradient(#b4d6f8, #d9e9fa 110px, #eef5fd 134px, #b4d6f8 135px);
  box-shadow: inset 0 0 0 1px #fff, 0 0 6px rgba(0, 0, 0, 0.7), 4px 5px 16px rgba(0, 0, 0, 0.8);
  color: #000;
  font-size: 11px;
}
.dialog-title {
  display: flex;
  justify-content: space-between;
  align-items: center;
  height: 28px;
  text-shadow: 0 0 8px #fff, 0 0 12px #fff;
}
.dialog-controls {
  display: flex;
  align-self: flex-start;
  border: 1px solid #5c6b7c;
  border-top: 0;
  border-radius: 0 0 4px 4px;
  overflow: hidden;
}
.dialog-controls button {
  display: grid;
  place-items: center;
  height: 19px;
}
.help {
  width: 27px;
  background: linear-gradient(#d5e0ec 45%, #a9bbcf 50%, #c8daec);
  color: #fff;
  font-weight: 700;
  font-size: 14px;
  text-shadow: none;
  -webkit-text-stroke: 2px #556;
  paint-order: stroke fill;
}
.close {
  width: 48px;
  border-left: 1px solid #5c6b7c;
  background: linear-gradient(#eab0a6, #d8776a 45%, #bb2e1b 50%, #d9705c);
}
.dialog-body {
  padding: 7px 7px 8px 6px;
  border: 1px solid #5c6b7c;
  background: #f0f0f0;
}
.dialog-tabs {
  display: flex;
  align-items: flex-end;
  height: 22px;
  padding-left: 2px;
}
.dialog-tabs button {
  min-width: 51px;
  height: 20px;
  padding: 0 7px;
  border: 1px solid #8c8e94;
  border-bottom: 0;
  background: linear-gradient(#f2f2f2 45%, #dcdcdc 50%, #d0d0d0);
}
.dialog-tabs button + button {
  border-left: 0;
}
.dialog-tabs .active {
  height: 23px;
  margin-bottom: -1px;
  padding: 0 5px;
  background: #fff;
}
.dialog-tabs .active span {
  display: block;
  padding: 0 10px;
  border: 1px dotted #000;
}
.panel {
  padding: 7px 8px 9px;
  border: 1px solid #8c8e94;
  background: #fff;
}
.margins {
  display: grid;
  grid-template-columns: 78px 122px 1fr;
  gap: 15px 0;
  align-items: center;
  padding-left: 77px;
}
.field label {
  display: block;
  margin-bottom: 1px;
}
.field.top {
  grid-column: 2;
  padding-left: 22px;
}
.field.left {
  grid-column: 1;
}
.centering {
  padding-top: 1px;
}
.centering h2 {
  display: flex;
  align-items: center;
  gap: 6px;
  margin: 0 0 3px;
  font: inherit;
}
.centering h2::after {
  content: "";
  flex: 1;
  height: 1px;
  background: #d5dfe5;
}
.centering label {
  display: flex;
  align-items: center;
  gap: 4px;
  height: 19px;
  padding-left: 9px;
}
.centering input {
  appearance: none;
  width: 13px;
  height: 13px;
  border: 1px solid #8e8f8f;
  background: linear-gradient(135deg, #cbcfd5, #f6f6f6);
  box-shadow: inset 0 0 0 2px #f4f4f4;
}
.actions {
  display: flex;
  justify-content: flex-end;
  gap: 10px;
}
.actions button {
  width: 74px;
  height: 22px;
  border: 1px solid #707070;
  border-radius: 3px;
  background: linear-gradient(#f2f2f2 45%, #ddd 50%, #cfcfcf);
}
.actions .default {
  border-color: #3c7fb1;
  box-shadow: inset 0 0 0 1px #46c8f5;
}
.panel .actions {
  padding-top: 25px;
}
.panel + .actions {
  padding-top: 9px;
}
```
